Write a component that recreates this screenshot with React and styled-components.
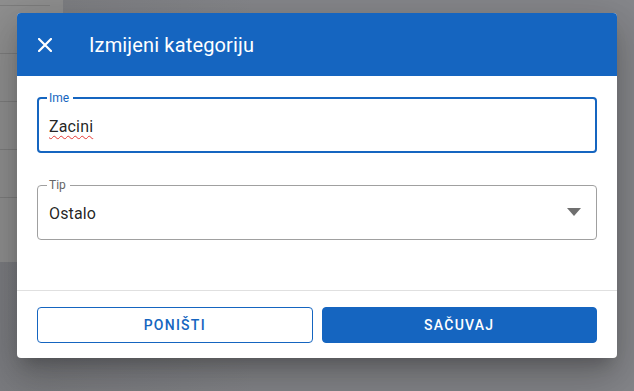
import styled, {createGlobalStyle} from 'styled-components'

const Global = createGlobalStyle`
  html, body { margin: 0; padding: 0; }
  body {
    width: 634px;
    height: 391px;
    overflow: hidden;
    background: #818286;
    font-family: Roboto, "Liberation Sans", sans-serif;
  }
`

export default function App() {
  return (
    <>
      <Global/>
      <Page>
        <Backdrop>
          <Sheet>
            <SheetTop/>
            <SheetRow/>
            <SheetRow/>
            <SheetRow/>
            <SheetRow/>
          </Sheet>
        </Backdrop>
        <Dialog>
          <Header>
            <CloseBtn aria-label="close">
              <svg width="14" height="14" viewBox="0 0 14 14">
                <path d="M1 1 L13 13 M13 1 L1 13" stroke="#fff" strokeWidth="2.2" strokeLinecap="square"/>
              </svg>
            </CloseBtn>
            <Title>Izmijeni kategoriju</Title>
          </Header>
          <Body>
            <Field $focused>
              <Outline $focused><legend>Ime</legend></Outline>
              <Value><Misspelled>Zacini</Misspelled></Value>
            </Field>
            <Field>
              <Outline><legend>Tip</legend></Outline>
              <Value>Ostalo</Value>
              <Arrow>
                <svg width="14" height="8" viewBox="0 0 14 8">
                  <path d="M0 0 H14 L7 8 Z" fill="#6f6f6f"/>
                </svg>
              </Arrow>
            </Field>
          </Body>
          <Footer>
            <Button $variant="outlined">Poništi</Button>
            <Button $variant="contained">Sačuvaj</Button>
          </Footer>
        </Dialog>
      </Page>
    </>
  )
}

const Page = styled.div`
  width: 634px;
  height: 391px;
  display: flex;
  justify-content: center;
  align-items: flex-start;
  padding-top: 13px;
  box-sizing: border-box;
  position: relative;
  background: linear-gradient(90deg, #7b7c80 0%, #86878b 40%, #86878b 100%);
`

const Backdrop = styled.div`
  position: absolute;
  inset: 0;
  display: flex;
`

const Sheet = styled.div`
  width: 63px;
  height: 262px;
  background: #8f8f8f;
  display: flex;
  flex-direction: column;
`

const SheetTop = styled.div`
  height: 5px;
  border-bottom: 1px solid #7d7d7d;
  margin-right: 13px;
`

const SheetRow = styled.div`
  height: 47px;
  border-bottom: 1px solid #7d7d7d;
`

const Dialog = styled.div`
  position: relative;
  width: 600px;
  height: 345px;
  background: #fff;
  border-radius: 4px;
  overflow: hidden;
  display: flex;
  flex-direction: column;
  box-shadow: 0 11px 15px -7px rgba(0,0,0,0.2), 0 24px 38px 3px rgba(0,0,0,0.14), 0 9px 46px 8px rgba(0,0,0,0.12);
`

const Header = styled.div`
  height: 63px;
  background: #1565c0;
  display: flex;
  align-items: center;
  padding: 0 16px 0 20px;
  flex-shrink: 0;
`

const CloseBtn = styled.button`
  width: 16px;
  height: 16px;
  padding: 0;
  border: none;
  background: none;
  display: flex;
  align-items: center;
  justify-content: center;
  margin-right: 36px;
`

const Title = styled.div`
  color: #fff;
  font-size: 20px;
  font-weight: 400;
  letter-spacing: 0.15px;
`

const Body = styled.div`
  flex: 1;
  padding: 21px 20px 0;
  display: flex;
  flex-direction: column;
  gap: 31px;
  border-bottom: 1px solid #e0e0e0;
`

const Field = styled.div`
  position: relative;
  height: 56px;
  display: flex;
  align-items: center;
  padding: 0 12px;
`

const Outline = styled.fieldset`
  position: absolute;
  inset: -5px 0 0 0;
  margin: 0;
  padding: 0 8px;
  border-radius: 4px;
  border: ${p => p.$focused ? '2px solid #1565c0' : '1px solid #a0a0a0'};
  pointer-events: none;
  legend {
    padding: 0 4px 0 2px;
    margin-left: ${p => p.$focused ? '0px' : '1px'};
    font-size: 12px;
    line-height: 12px;
    color: ${p => p.$focused ? '#1565c0' : '#666'};
  }
`

const Value = styled.div`
  font-size: 16px;
  color: rgba(0,0,0,0.87);
  letter-spacing: 0.15px;
  flex: 1;
  padding-top: 2px;
`

const Misspelled = styled.span`
  text-decoration: underline wavy #e53935;
  text-decoration-thickness: 1px;
  text-underline-offset: 3px;
`

const Arrow = styled.div`
  display: flex;
  margin-right: 4px;
`

const Footer = styled.div`
  display: flex;
  gap: 9px;
  padding: 16px 20px 15px;
`

const Button = styled.button`
  flex: 1;
  height: 36px;
  border-radius: 4px;
  font-family: Roboto, "Liberation Sans", sans-serif;
  font-size: 14px;
  font-weight: 500;
  letter-spacing: 1.25px;
  text-transform: uppercase;
  cursor: pointer;
  box-sizing: border-box;
  color: ${p => p.$variant === 'contained' ? '#fff' : '#1565c0'};
  background: ${p => p.$variant === 'contained' ? '#1565c0' : '#fff'};
  border: 1px solid #1565c0;
`
